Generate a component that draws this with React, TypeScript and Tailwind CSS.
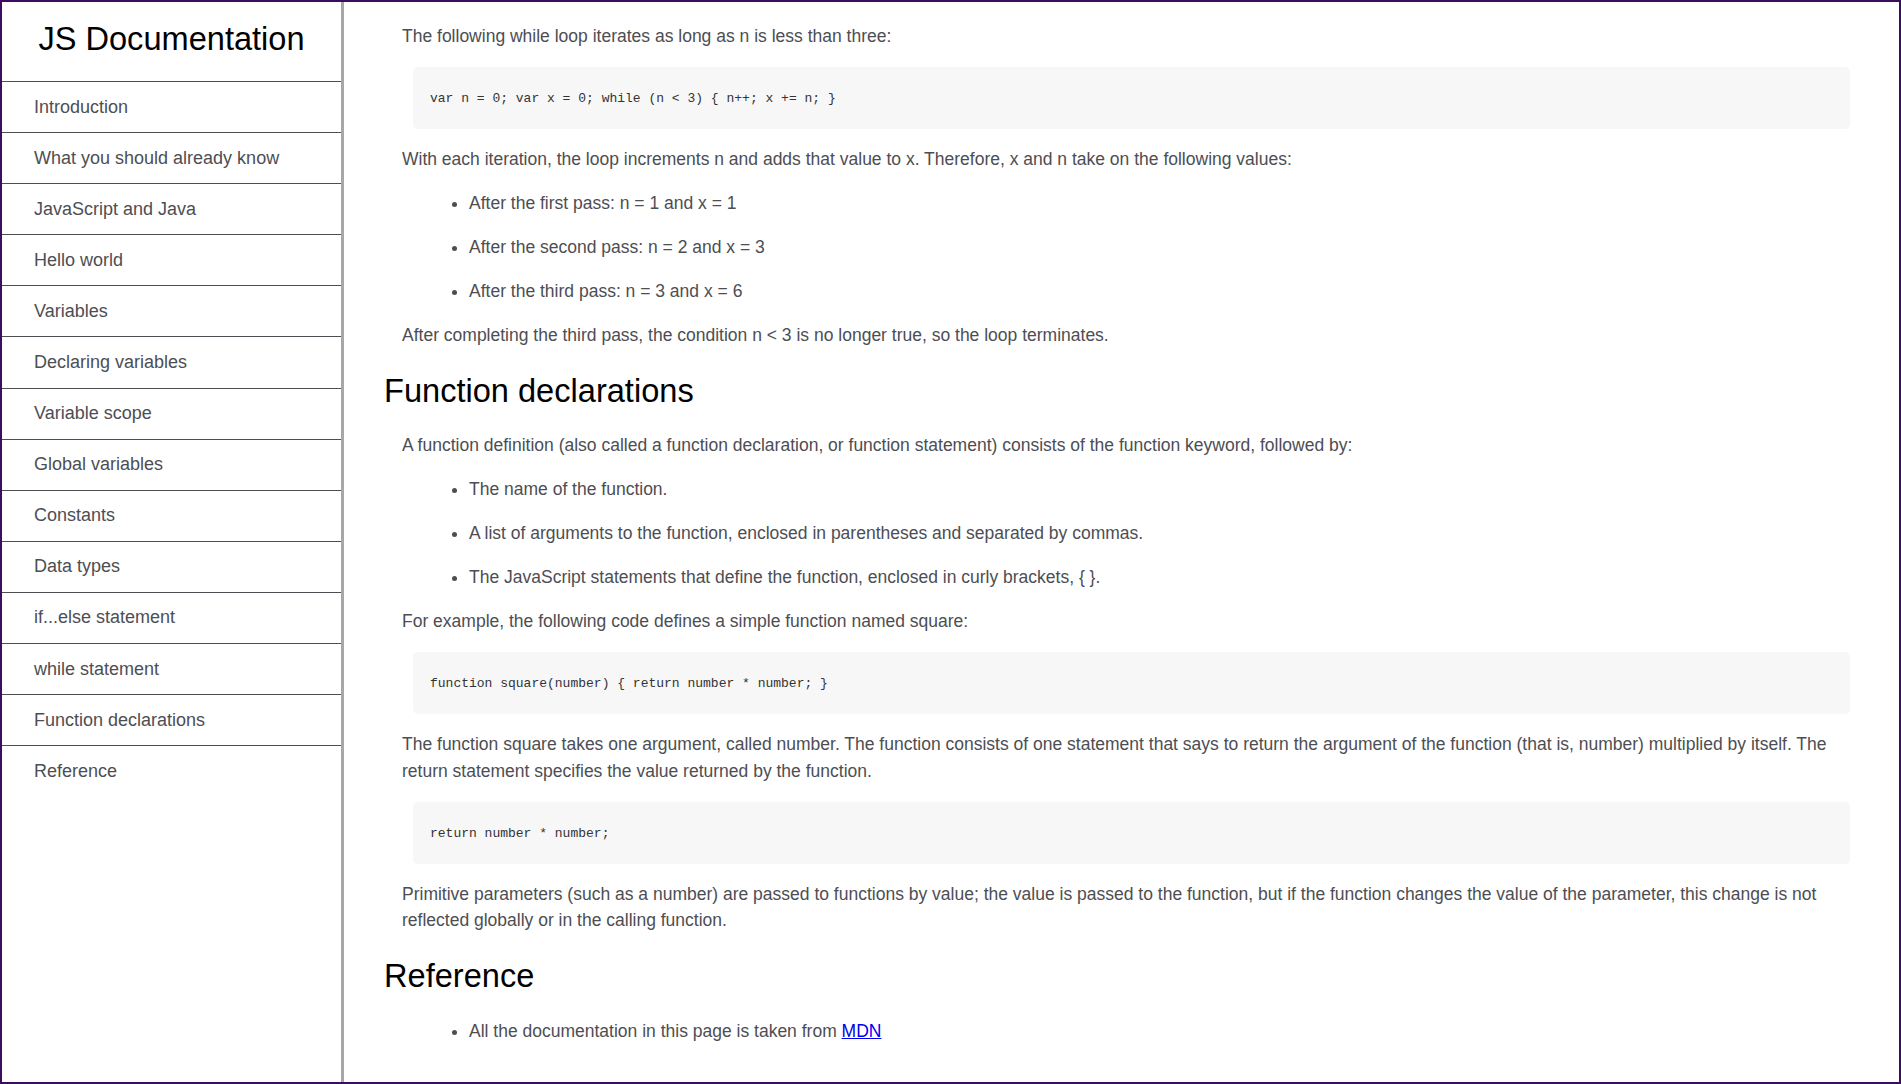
const navLinks = [
  "Introduction",
  "What you should already know",
  "JavaScript and Java",
  "Hello world",
  "Variables",
  "Declaring variables",
  "Variable scope",
  "Global variables",
  "Constants",
  "Data types",
  "if...else statement",
  "while statement",
  "Function declarations",
  "Reference",
];

const Para = ({ children }: { children: React.ReactNode }) => (
  <p className="pl-[18px] text-[17.5px] leading-[26.6px] text-[#4d4e53]">{children}</p>
);

const Code = ({ children }: { children: React.ReactNode }) => (
  <pre className="ml-[29px] h-[62px] rounded-[5px] bg-[#f7f7f7] px-[17px] text-[13px] leading-[62px] text-[#333] [font-family:'DejaVu_Sans_Mono',monospace]">
    <code>{children}</code>
  </pre>
);

const Bullets = ({ items }: { items: React.ReactNode[] }) => (
  <ul className="flex list-disc flex-col gap-[17.3px] pl-[85px] text-[17.5px] leading-[26.6px] text-[#4d4e53]">
    {items.map((item, i) => (
      <li key={i}>{item}</li>
    ))}
  </ul>
);

const Heading = ({ children }: { children: React.ReactNode }) => (
  <h2 className="my-[6px] text-[32.6px] leading-[37.4px] text-black">{children}</h2>
);

export default function App() {
  return (
    <div className="flex h-[1084px] w-full overflow-hidden border-2 border-[#3b0d5c] bg-white [font-family:'Liberation_Sans',Arial,sans-serif]">
      {/* Sidebar */}
      <nav className="flex w-[342px] flex-shrink-0 flex-col border-r-[3px] border-[#a3a9a9]">
        <header className="flex h-[79px] items-center justify-center pb-[4px]">
          <h1 className="text-[32.6px] leading-none text-black">JS Documentation</h1>
        </header>
        <ul>
          {navLinks.map((link) => (
            <li
              key={link}
              className="flex h-[51.1px] items-center border-t border-[#4d4e53] pl-[32px] text-[18px] text-[#4d4e53]"
            >
              <a href={`#${link.replace(/ /g, "_")}`}>{link}</a>
            </li>
          ))}
        </ul>
      </nav>

      {/* Main content */}
      <main className="flex min-w-0 flex-1 flex-col gap-[17.3px] overflow-hidden pl-[40px] pr-[49px] pt-[21px]">
        <Para>The following while loop iterates as long as n is less than three:</Para>
        <Code>var n = 0; var x = 0; while (n &lt; 3) {"{"} n++; x += n; {"}"}</Code>
        <Para>
          With each iteration, the loop increments n and adds that value to x. Therefore, x and n take on the
          following values:
        </Para>
        <Bullets
          items={[
            "After the first pass: n = 1 and x = 1",
            "After the second pass: n = 2 and x = 3",
            "After the third pass: n = 3 and x = 6",
          ]}
        />
        <Para>After completing the third pass, the condition n &lt; 3 is no longer true, so the loop terminates.</Para>

        <Heading>Function declarations</Heading>
        <Para>
          A function definition (also called a function declaration, or function statement) consists of the function
          keyword, followed by:
        </Para>
        <Bullets
          items={[
            "The name of the function.",
            "A list of arguments to the function, enclosed in parentheses and separated by commas.",
            "The JavaScript statements that define the function, enclosed in curly brackets, { }.",
          ]}
        />
        <Para>For example, the following code defines a simple function named square:</Para>
        <Code>function square(number) {"{"} return number * number; {"}"}</Code>
        <Para>
          The function square takes one argument, called number. The function consists of one statement that says to
          return the argument of the function (that is, number) multiplied by itself. The return statement specifies
          the value returned by the function.
        </Para>
        <Code>return number * number;</Code>
        <Para>
          Primitive parameters (such as a number) are passed to functions by value; the value is passed to the
          function, but if the function changes the value of the parameter, this change is not reflected globally or
          in the calling function.
        </Para>

        <Heading>Reference</Heading>
        <Bullets
          items={[
            <>
              All the documentation in this page is taken from{" "}
              <a
                href="https://developer.mozilla.org/en-US/docs/Web/JavaScript/Guide"
                className="text-[#0000ee] underline"
              >
                MDN
              </a>
            </>,
          ]}
        />
      </main>
    </div>
  );
}
